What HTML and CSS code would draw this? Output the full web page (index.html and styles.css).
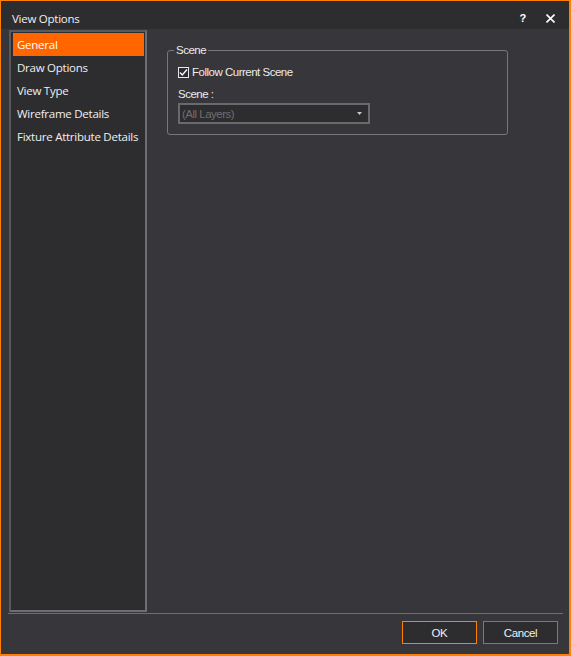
FILE: index.html
```html
<!DOCTYPE html>
<html>
<head>
<meta charset="utf-8">
<link rel="stylesheet" href="styles.css">
</head>
<body>
<div class="window">
  <div class="titlebar">
    <span class="title">View Options</span>
    <span class="tb-btns">
      <span class="help">?</span>
      <svg class="close" width="9" height="9" viewBox="0 0 9 9"><path d="M0.5 0.5L8.5 8.5M8.5 0.5L0.5 8.5" stroke="#fff" stroke-width="1.6"/></svg>
    </span>
  </div>
  <div class="main">
    <div class="nav">
      <div class="nav-item sel">General</div>
      <div class="nav-item">Draw Options</div>
      <div class="nav-item">View Type</div>
      <div class="nav-item">Wireframe Details</div>
      <div class="nav-item">Fixture Attribute Details</div>
    </div>
    <div class="content">
      <fieldset class="group">
        <legend>Scene</legend>
        <label class="check">
          <span class="box"><svg width="11" height="11" viewBox="0 0 11 11"><path d="M2 5.5L4.3 8L9 2.5" fill="none" stroke="#fff" stroke-width="1.3"/></svg></span>
          Follow Current Scene
        </label>
        <div class="lbl">Scene :</div>
        <div class="select">
          <span>(All Layers)</span>
          <svg width="5" height="3" viewBox="0 0 5 3"><path d="M0 0H5L2.5 3Z" fill="#c8c8c8"/></svg>
        </div>
      </fieldset>
    </div>
  </div>
  <div class="footer">
    <button class="btn ok">OK</button>
    <button class="btn">Cancel</button>
  </div>
</div>
</body>
</html>
```
FILE: styles.css
```css
html, body {
  margin: 0;
  padding: 0;
  background: #37363b;
}
.window {
  width: 571px;
  height: 656px;
  box-sizing: border-box;
  border: 1px solid #ff8000;
  border-right-width: 2px;
  border-bottom-width: 2px;
  background: #37363b;
  display: flex;
  flex-direction: column;
  font-family: "Open Sans", "Noto Sans", sans-serif;
  font-size: 11.5px;
  letter-spacing: -0.25px;
  color: #f0f0f0;
}
.titlebar {
  height: 28px;
  box-sizing: border-box;
  background: #2d2d30;
  display: flex;
  align-items: center;
  justify-content: space-between;
  padding: 6px 14px 0 11px;
  flex: none;
}
.title {
  color: #f0f0f0;
}
.tb-btns {
  display: flex;
  align-items: center;
  gap: 20px;
}
.help {
  font-family: "Liberation Sans", sans-serif;
  font-weight: bold;
  font-size: 11px;
  color: #fff;
}
.main {
  display: flex;
  height: 583px;
  box-sizing: content-box;
  border-bottom: 1px solid #6e6e70;
  margin: 0 6px 0 7px;
  padding: 1px 0 0 1px;
  flex: none;
}
.nav {
  width: 138px;
  height: 582px;
  box-sizing: border-box;
  flex: none;
  background: #2d2d30;
  border: 2px solid #6a6a6d;
  border-color: #5a5a5d #6e6e70 #6e6e70 #5a5a5d;
  padding: 1px 1px 1px 2px;
}
.nav-item {
  height: 23px;
  line-height: 23px;
  padding-left: 4px;
  white-space: nowrap;
}
.nav-item.sel {
  background: #ff6600;
  color: #fff;
}
.content {
  flex: 1;
  padding: 14px 0 0 20px;
}
.group {
  margin: 0;
  width: 341px;
  box-sizing: border-box;
  height: 91px;
  border: 1px solid #77777a;
  border-radius: 3px;
  padding: 0 0 0 10px;
  font-family: "Liberation Sans", Arial, sans-serif;
  font-size: 11.5px;
  letter-spacing: -0.5px;
  color: #ececec;
}
.group legend {
  padding: 0 2px;
  margin-left: -4px;
  line-height: 13px;
}
.check {
  display: flex;
  align-items: center;
  gap: 3px;
  height: 14px;
  margin-top: 8px;
}
.box {
  width: 11px;
  height: 11px;
  box-sizing: border-box;
  border: 1px solid #e8e8e8;
  display: flex;
  align-items: center;
  justify-content: center;
  background: #2d2d30;
  flex: none;
}
.box svg {
  flex: none;
}
.lbl {
  margin-top: 8px;
  line-height: 14px;
}
.select {
  margin-top: 2px;
  width: 192px;
  height: 21px;
  box-sizing: border-box;
  border: 2px solid #6a6a6d;
  background: #2d2d30;
  display: flex;
  align-items: center;
  justify-content: space-between;
  padding: 0 6px 0 2px;
  color: #6f6f72;
}
.footer {
  flex: 1;
  display: flex;
  justify-content: flex-end;
  align-items: flex-start;
  gap: 6px;
  padding: 7px 11px 0 0;
}
.btn {
  width: 75px;
  height: 23px;
  background: #2d2d30;
  border: 1px solid #7a7a7d;
  color: #f0f0f0;
  font-family: "Liberation Sans", Arial, sans-serif;
  font-size: 11.5px;
  letter-spacing: -0.4px;
  padding: 0;
}
.btn.ok {
  border-color: #ff8000;
}
```
